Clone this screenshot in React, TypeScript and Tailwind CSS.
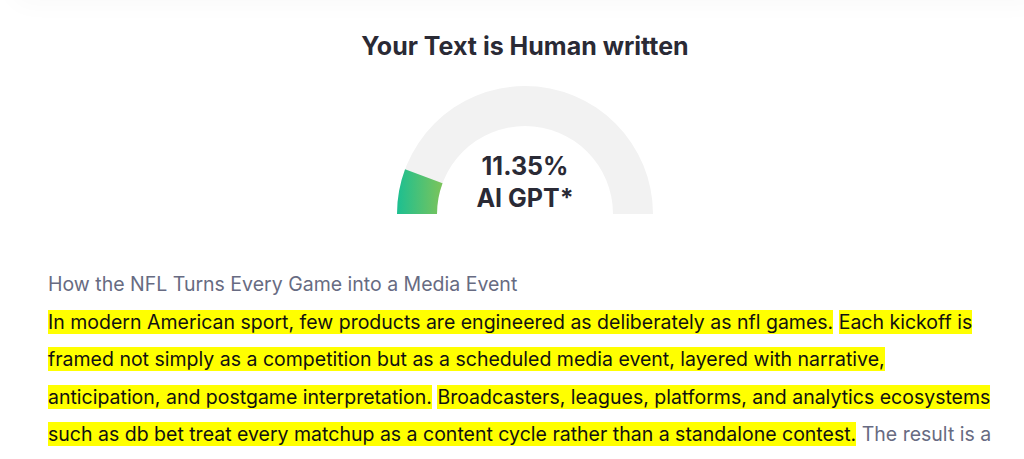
const GAUGE_PCT = 11.35

function arcPoint(r: number, deg: number) {
  const a = (deg * Math.PI) / 180
  return [128 - r * Math.cos(a), 128 - r * Math.sin(a)]
}

function Gauge({ pct }: { pct: number }) {
  const deg = (pct / 100) * 180
  const [ox, oy] = arcPoint(128, deg)
  const [ix, iy] = arcPoint(88, deg)
  return (
    <div className="relative w-[256px] h-[128px]">
      <svg width="256" height="128" viewBox="0 0 256 128" className="block">
        <defs>
          <linearGradient id="g" x1="0" y1="0" x2="1" y2="0">
            <stop offset="0" stopColor="#1cbf91" />
            <stop offset="1" stopColor="#7cc45a" />
          </linearGradient>
        </defs>
        <path d="M0 128 A128 128 0 0 1 256 128 L216 128 A88 88 0 0 0 40 128 Z" fill="#f2f2f2" />
        <path d={`M0 128 A128 128 0 0 1 ${ox} ${oy} L${ix} ${iy} A88 88 0 0 0 40 128 Z`} fill="url(#g)" />
      </svg>
      <div className="absolute inset-x-0 top-[64px] flex flex-col items-center text-[25px] leading-[32px] font-bold text-[#2a2a35]">
        <span>{pct}%</span>
        <span>AI GPT*</span>
      </div>
    </div>
  )
}

const hl = 'bg-[#ffff00] text-[#111111]'

export default function App() {
  return (
    <div className="relative min-h-screen bg-white font-['Inter',sans-serif] overflow-hidden">
      <div className="absolute -top-[40px] left-[10px] right-[-20px] h-[40px] rounded-[40px] shadow-[0_6px_24px_rgba(0,0,0,0.025)]" />
      <div className="ml-[48px] w-[954px] pt-[30px]">
        <div className="flex flex-col items-center">
          <h1 className="text-[25px] leading-[32px] font-bold text-[#2a2a35]">Your Text is Human written</h1>
          <div className="mt-[24px]">
            <Gauge pct={GAUGE_PCT} />
          </div>
        </div>
        <div className="mt-[52px] text-[19.5px] leading-[37.5px]">
          <p className="text-[#676b82]">How the NFL Turns Every Game into a Media Event</p>
          <p className="text-[#676b82]">
            <span className={hl}>In modern American sport, few products are engineered as deliberately as nfl games.</span>{' '}
            <span className={hl}>
              Each kickoff is framed not simply as a competition but as a scheduled media event, layered with narrative,
              anticipation, and postgame interpretation.
            </span>{' '}
            <span className={hl}>
              Broadcasters, leagues, platforms, and analytics ecosystems such as db bet treat every matchup as a content cycle
              rather than a standalone contest.
            </span>{' '}
            The result is a
          </p>
        </div>
      </div>
    </div>
  )
}
